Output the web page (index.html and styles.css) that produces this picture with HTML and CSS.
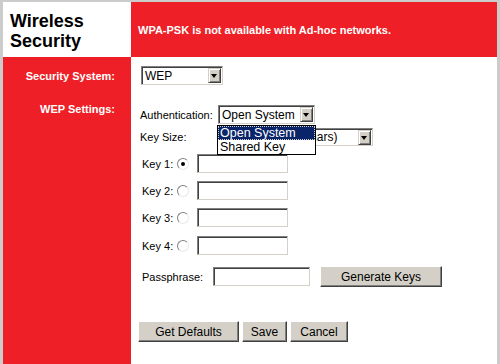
FILE: index.html
```html
<!DOCTYPE html>
<html lang="en">
<head>
  <meta charset="UTF-8" />
  <title>Wireless Security</title>
  <link rel="stylesheet" href="styles.css">
</head>
<body>
  <div class="page">
    <div class="title">Wireless<br>Security</div>
    <div class="notice">WPA-PSK is not available with Ad-hoc networks.</div>

    <div class="label label-sec">Security System:</div>
    <div class="cell cell-sec">
      <div class="select sel-sec"><span class="val">WEP</span><span class="arrow"></span></div>
    </div>

    <div class="label label-wep">WEP Settings:</div>
    <div class="cell cell-wep">
      <div class="row row-auth">
        <span class="lbl lbl-auth">Authentication:</span>
        <div class="select sel-auth">
          <span class="val">Open System</span><span class="arrow"></span>
          <ul class="dropdown">
            <li class="active">Open System</li>
            <li>Shared Key</li>
          </ul>
        </div>
      </div>

      <div class="row row-size">
        <span class="lbl lbl-auth">Key Size:</span>
        <div class="select sel-size"><span class="val">64 bits (10 hex chars)</span><span class="arrow"></span></div>
      </div>

      <div class="row row-key">
        <span class="lbl lbl-key">Key 1:</span>
        <span class="radio checked"></span>
        <span class="field"></span>
      </div>
      <div class="row row-key">
        <span class="lbl lbl-key">Key 2:</span>
        <span class="radio"></span>
        <span class="field"></span>
      </div>
      <div class="row row-key">
        <span class="lbl lbl-key">Key 3:</span>
        <span class="radio"></span>
        <span class="field"></span>
      </div>
      <div class="row row-key row-key4">
        <span class="lbl lbl-key">Key 4:</span>
        <span class="radio"></span>
        <span class="field"></span>
      </div>

      <div class="row row-pass">
        <span class="lbl lbl-pass">Passphrase:</span>
        <span class="field field-pass"></span>
        <span class="btn btn-gen">Generate Keys</span>
      </div>

      <div class="row row-actions">
        <span class="btn btn-def">Get Defaults</span>
        <span class="btn btn-save">Save</span>
        <span class="btn btn-cancel">Cancel</span>
      </div>
    </div>
  </div>
</body>
</html>
```

FILE: styles.css
```css
html, body {
  margin: 0;
  padding: 0;
  background: #cccccc;
}

body {
  font-family: "Liberation Sans", Arial, sans-serif;
  font-size: 11px;
  color: #000;
}

.page {
  margin: 2px 3px 0 3px;
  min-height: calc(100vh - 2px);
  display: grid;
  grid-template-columns: 128px 1fr;
  grid-template-rows: 55px 39px 1fr;
  background: white;
}

.title {
  background: white;
  font-size: 18px;
  font-weight: bold;
  line-height: 20px;
  padding: 9px 0 0 7px;
}

.notice {
  background: #ee1f26;
  color: white;
  font-weight: bold;
  display: flex;
  align-items: center;
  padding-left: 7px;
}

.label {
  background: #ee1f26;
  color: white;
  font-weight: bold;
  text-align: right;
  padding-right: 16px;
  line-height: 13px;
}

.label-sec {
  padding-top: 13px;
}

.label-wep {
  padding-top: 7px;
}

.cell-sec {
  padding: 9px 0 0 10px;
}

.cell-wep {
  padding: 9px 0 0 9px;
}

/* fake form controls, windows classic look */
.select {
  position: relative;
  box-sizing: border-box;
  height: 19px;
  background: white;
  border-top: 1px solid #808080;
  border-left: 1px solid #808080;
  border-right: 1px solid #d4d0c8;
  border-bottom: 1px solid #d4d0c8;
  box-shadow: inset 1px 1px 0 #404040;
  font-size: 12px;
  line-height: 16px;
  display: flex;
  align-items: center;
}

.select .val {
  flex: 1;
  padding-left: 3px;
  white-space: nowrap;
  overflow: hidden;
}

.select .arrow {
  position: relative;
  width: 13px;
  height: 15px;
  margin-right: 1px;
  box-sizing: border-box;
  background: #d4d0c8;
  border-top: 1px solid #d4d0c8;
  border-left: 1px solid #d4d0c8;
  border-right: 1px solid #404040;
  border-bottom: 1px solid #404040;
  box-shadow: inset 1px 1px 0 #fff, inset -1px -1px 0 #808080;
}

.select .arrow::after {
  content: "";
  position: absolute;
  left: 2px;
  top: 5px;
  border-left: 3.5px solid transparent;
  border-right: 3.5px solid transparent;
  border-top: 4px solid #000;
}

.sel-sec {
  width: 82px;
}

.sel-auth {
  width: 97px;
  z-index: 2;
}

.sel-size {
  width: 155px;
  height: 18px;
}

.dropdown {
  position: absolute;
  top: 19px;
  left: -2px;
  width: 99px;
  margin: 0;
  padding: 0;
  list-style: none;
  background: white;
  border: 1px solid #000;
  box-sizing: border-box;
}

.dropdown li {
  height: 14px;
  line-height: 14px;
  padding-left: 2px;
  font-size: 12.5px;
}

.dropdown li.active {
  background: #0a246a;
  color: white;
  outline: 1px dotted #d4d0c8;
  outline-offset: -1px;
}

.row {
  display: flex;
  align-items: center;
}

.lbl {
  white-space: nowrap;
}

.lbl-auth {
  width: 78px;
}

.row-size {
  margin-top: 4px;
}

.row-key {
  margin-top: 8px;
  padding-left: 2px;
}

.row-key4 {
  margin-top: 9px;
}

.lbl-key {
  width: 35px;
}

.radio {
  width: 12px;
  height: 12px;
  box-sizing: border-box;
  border-radius: 50%;
  border: 1px solid;
  border-color: #808080 #e8e8e8 #e8e8e8 #808080;
  background: white;
  position: relative;
  margin-right: 8px;
}

.radio.checked::after {
  content: "";
  position: absolute;
  left: 3px;
  top: 3px;
  width: 4px;
  height: 4px;
  border-radius: 50%;
  background: #000;
}

.field {
  display: block;
  width: 91px;
  height: 19px;
  box-sizing: border-box;
  background: white;
  border-top: 1px solid #808080;
  border-left: 1px solid #808080;
  border-right: 1px solid #d4d0c8;
  border-bottom: 1px solid #d4d0c8;
  box-shadow: inset 1px 1px 0 #404040;
}

.row-pass {
  margin-top: 11px;
  padding-left: 2px;
}

.lbl-pass {
  width: 71px;
}

.field-pass {
  width: 97px;
}

.btn {
  display: flex;
  align-items: center;
  justify-content: center;
  height: 21px;
  box-sizing: border-box;
  background: #d4d0c8;
  border-top: 1px solid #fff;
  border-left: 1px solid #fff;
  border-right: 1px solid #404040;
  border-bottom: 1px solid #404040;
  box-shadow: inset -1px -1px 0 #808080;
  font-size: 12px;
}

.btn-gen {
  width: 122px;
  margin-left: 10px;
}

.row-actions {
  margin-top: 34px;
  margin-left: -2px;
  gap: 3px;
}

.btn-def {
  width: 101px;
}

.btn-save {
  width: 45px;
}

.btn-cancel {
  width: 58px;
}
```
